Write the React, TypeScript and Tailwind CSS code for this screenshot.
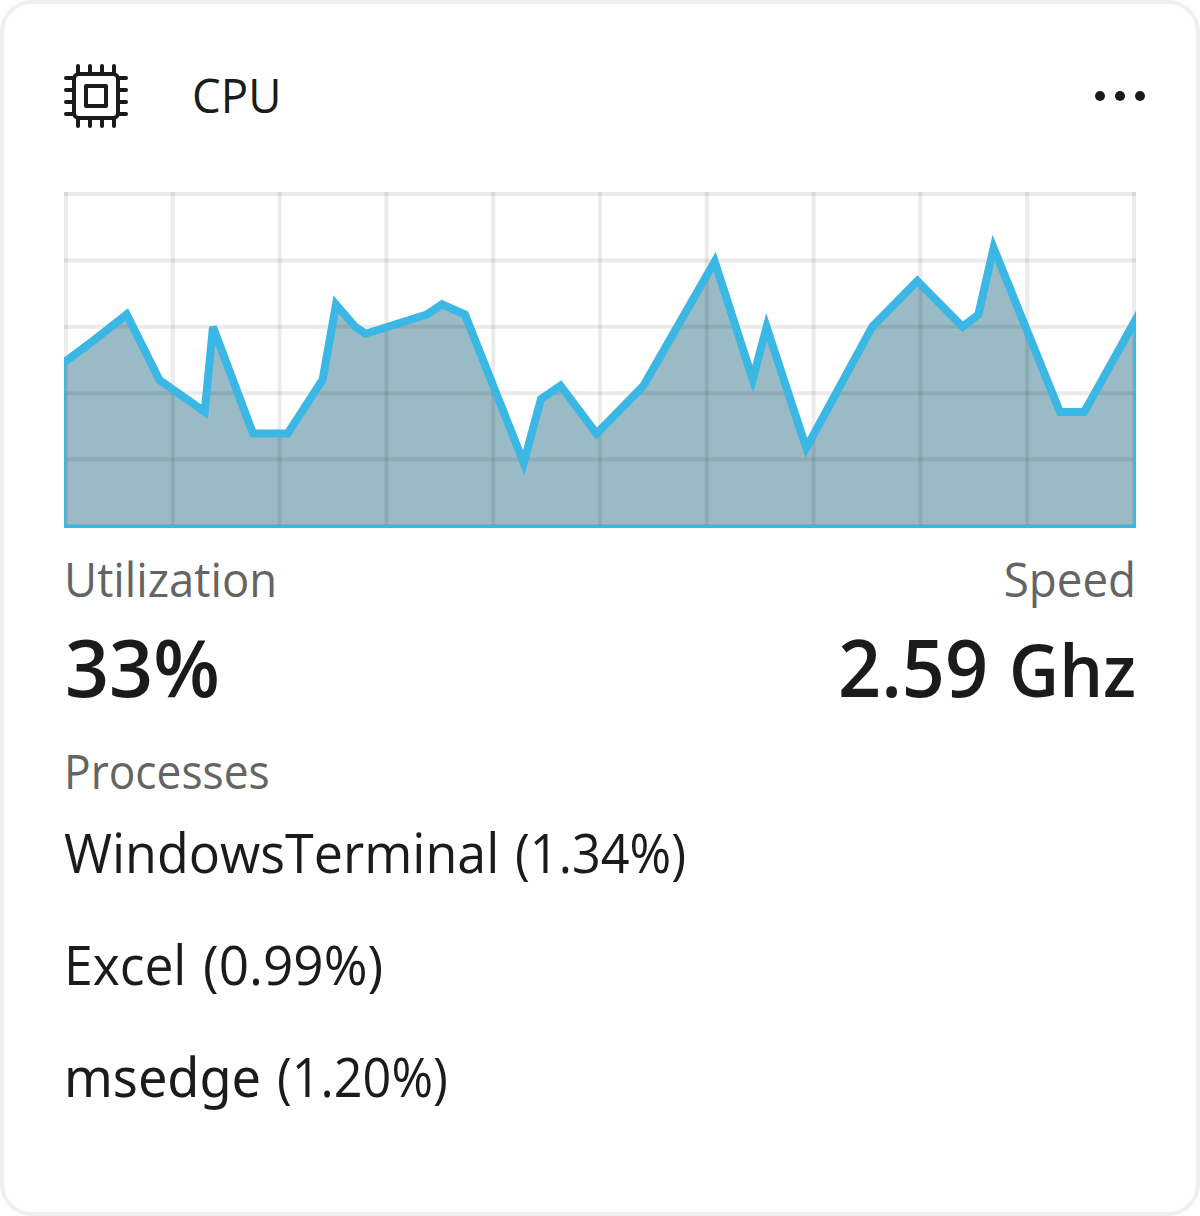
const chartPoints: [number, number][] = [
  [-2, 172], [29.5, 148.5], [62.7, 122.5], [95.5, 188], [140.7, 219.7], [149, 135], [189, 241.5],
  [223.7, 241.5], [258.6, 187.7], [272, 112.5], [291, 134.5], [301.7, 141.7], [362.7, 122.5],
  [378, 112.3], [401, 122.6], [459.7, 270.7], [477, 207], [496.5, 193.7], [532.6, 241.6],
  [579.4, 193.7], [650.7, 69.5], [688.7, 187.3], [702.6, 135], [742.3, 256], [808.3, 134.6],
  [853.3, 89], [898.6, 134.7], [914.3, 122.7], [929.6, 56], [996, 220], [1020.3, 220], [1074, 123.5],
];
const outline =
  "M" + chartPoints.map(([x, y]) => `${x} ${y}`).join("L") + "L1074 337L-2 337Z";
const columns = Array.from({ length: 11 }, (_, i) => 2 + i * 106.8);
const rows = Array.from({ length: 6 }, (_, i) => 2 + i * 66.4);
const pins = [14, 26, 38, 50];

function CpuIcon() {
  return (
    <svg className="h-16 w-16" viewBox="0 0 64 64" fill="none" stroke="#1b1b1b" strokeWidth="4" strokeLinecap="round">
      <rect x="10" y="10" width="44" height="44" rx="5" />
      <rect x="22" y="22" width="20" height="20" strokeLinejoin="round" />
      {pins.map((p) => (
        <path key={p} d={`M${p} 2V8M${p} 56V62M2 ${p}H8M56 ${p}H62`} />
      ))}
    </svg>
  );
}

function UsageChart() {
  return (
    <svg className="mt-16 block h-[336px] w-full" viewBox="0 0 1072 336">
      <path d={outline} fill="#9abac5" />
      <g stroke="#000" strokeOpacity="0.08" strokeWidth="4">
        {columns.map((x) => (
          <line key={x} x1={x} x2={x} y1="0" y2="336" />
        ))}
        {rows.map((y) => (
          <line key={y} x1="0" x2="1072" y1={y} y2={y} />
        ))}
      </g>
      <path d={outline} fill="none" stroke="#3ab7e4" strokeWidth="8" />
    </svg>
  );
}

export default function App() {
  return (
    <main className="flex h-[1216px] w-[1200px] flex-col rounded-[32px] border-4 border-[#efefef] bg-white px-[60px] pt-[60px] font-['Open_Sans',sans-serif] whitespace-nowrap text-[#1b1b1b]">
      <header className="flex h-16 items-center">
        <CpuIcon />
        <h1 className="ml-16 origin-left scale-x-[.97] pb-0.5 text-[47px] leading-[60px]">CPU</h1>
        <button className="-mr-[9px] ml-auto flex gap-2.5" aria-label="More options">
          <span className="size-2.5 rounded-full bg-[#1b1b1b]" />
          <span className="size-2.5 rounded-full bg-[#1b1b1b]" />
          <span className="size-2.5 rounded-full bg-[#1b1b1b]" />
        </button>
      </header>

      <UsageChart />

      <div className="mt-[19px] flex justify-between text-[47px] leading-[64px] text-[#646464]">
        <span className="origin-left scale-x-[.967]">Utilization</span>
        <span className="origin-right scale-x-[.973]">Speed</span>
      </div>
      <div className="flex items-baseline justify-between text-[80px] leading-[110px] font-semibold">
        <span className="ml-px origin-left scale-x-[.964]">33%</span>
        <div className="flex items-baseline">
          <span className="w-[171px] origin-left scale-x-[.943]">2.59</span>
          <span className="w-[127px] origin-left scale-x-[.96] text-[72px] leading-[80px]">Ghz</span>
        </div>
      </div>

      <h2 className="mt-[18px] origin-left scale-x-[.942] self-start text-[47px] leading-[64px] text-[#646464]">Processes</h2>
      <ul className="mt-px flex flex-col gap-4 text-[55px] leading-[96px]">
        <li className="flex">
          <div className="w-[451px]">
            <span className="inline-block origin-left scale-x-[.945]">WindowsTerminal</span>
          </div>
          <span className="origin-left scale-x-[.916]">(1.34%)</span>
        </li>
        <li className="flex">
          <div className="w-[139px]">
            <span className="inline-block origin-left scale-x-[.938]">Excel</span>
          </div>
          <span className="origin-left scale-x-[.965]">(0.99%)</span>
        </li>
        <li className="flex">
          <div className="w-[213px]">
            <span className="inline-block origin-left scale-x-[.95] font-['Noto_Sans',sans-serif]">msedge</span>
          </div>
          <span className="origin-left scale-x-[.915]">(1.20%)</span>
        </li>
      </ul>
    </main>
  );
}
